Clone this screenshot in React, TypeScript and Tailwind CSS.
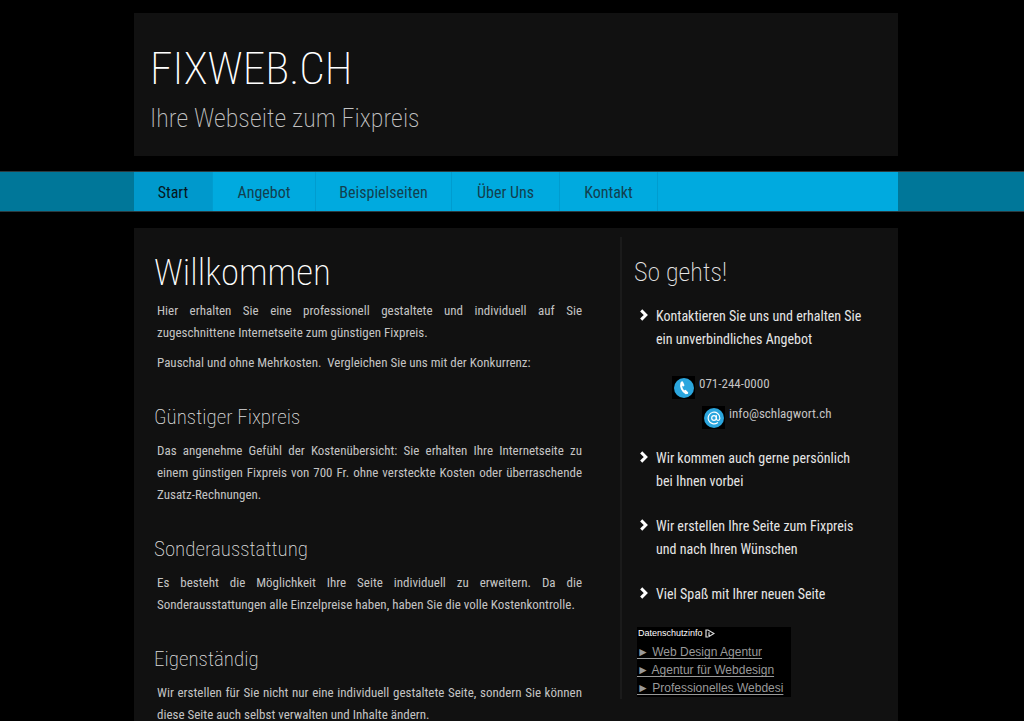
import type { ReactNode } from 'react'
import { AtSign } from 'lucide-react'

const navItems = [
  { label: 'Start', width: 'w-[79px]' },
  { label: 'Angebot', width: 'w-[103px]' },
  { label: 'Beispielseiten', width: 'w-[136px]' },
  { label: 'Über Uns', width: 'w-[108px]' },
  { label: 'Kontakt', width: 'w-[98px]' },
]

const sections = [
  {
    title: 'Günstiger Fixpreis',
    text: 'Das angenehme Gefühl der Kostenübersicht: Sie erhalten Ihre Internetseite zu einem günstigen Fixpreis von 700 Fr. ohne versteckte Kosten oder überraschende Zusatz-Rechnungen.',
  },
  {
    title: 'Sonderausstattung',
    text: 'Es besteht die Möglichkeit Ihre Seite individuell zu erweitern. Da die Sonderausstattungen alle Einzelpreise haben, haben Sie die volle Kostenkontrolle.',
  },
  {
    title: 'Eigenständig',
    text: 'Wir erstellen für Sie nicht nur eine individuell gestaltete Seite, sondern Sie können diese Seite auch selbst verwalten und Inhalte ändern.',
  },
]

const adLinks = ['Web Design Agentur', 'Agentur für Webdesign', 'Professionelles Webdesi']

function Container({ children }: { children: ReactNode }) {
  return (
    <div className="pl-2">
      <div className="mx-auto max-w-[764px]">{children}</div>
    </div>
  )
}

function Step({ children }: { children: ReactNode }) {
  return (
    <div className="flex gap-2 pl-1.5 text-sm leading-[23px] text-[#e6e6e6]">
      <svg viewBox="0 0 8 12" className="mt-1 h-3 w-2 shrink-0" fill="none" stroke="#fff" strokeWidth="3">
        <path d="M1.2 1.4 5.8 6 1.2 10.6" />
      </svg>
      <p>{children}</p>
    </div>
  )
}

function ContactIcon({ children }: { children: ReactNode }) {
  return (
    <span className="flex size-[23px] shrink-0 items-center justify-center self-end bg-black">
      <span className="flex size-5 items-center justify-center rounded-full bg-[#2ba6de] text-white">
        {children}
      </span>
    </span>
  )
}

function Handset() {
  return (
    <svg viewBox="0 0 14 14" className="size-3.5" fill="none" stroke="currentColor" strokeLinecap="round">
      <path d="M4.4 2.2C3.2 5.6 5.4 10.8 9 12.2" strokeWidth="2" />
      <path d="M5 1.6 6.2 4.2M8.2 10 10 11.8" strokeWidth="2.4" />
    </svg>
  )
}

export default function App() {
  return (
    <div className="bg-black pt-[13px] font-['Roboto_Condensed',Roboto,sans-serif] text-[#c4c4c4]">
      <Container>
        <header className="bg-[#111] px-4 pt-7 pb-5">
          <h1 className="text-[45px] leading-[56px] font-extralight text-white">FIXWEB.CH</h1>
          <p className="mt-1 text-[26px] leading-[35px] font-extralight text-[#c4c4c4]">Ihre Webseite zum Fixpreis</p>
        </header>
      </Container>

      <nav className="mt-[15px] border-y border-[#2b3a3f] bg-[#007799]">
        <Container>
          <ul className="flex h-[39px] bg-[#00aadf]">
            {navItems.map((item, i) => (
              <li key={item.label} className={item.width}>
                <a
                  href="#"
                  className={
                    'flex h-full items-center justify-center border-r border-[#009ccf] pt-0.5 text-base ' +
                    (i === 0 ? 'bg-[#0099cc] text-[#06161c]' : 'text-[#12404f]')
                  }
                >
                  {item.label}
                </a>
              </li>
            ))}
          </ul>
        </Container>
      </nav>

      <Container>
        <div className="mt-4 flex bg-[#111]">
          <main className="flex-1 pt-[21px] pr-[38px] pb-5 pl-5">
            <h1 className="mb-[3px] text-[37px] leading-[48px] font-extralight text-white">Willkommen</h1>
            <div className="space-y-2 pl-[3px] text-[13px] leading-[22px]">
              <p className="text-justify">
                Hier erhalten Sie eine professionell gestaltete und individuell auf Sie zugeschnittene
                Internetseite zum günstigen Fixpreis.
              </p>
              <p>Pauschal und ohne Mehrkosten.&nbsp; Vergleichen Sie uns mit der Konkurrenz:</p>
            </div>
            {sections.map((s) => (
              <section key={s.title} className="mt-[30px]">
                <h2 className="mb-2.5 text-[21px] leading-[26px] font-extralight text-[#dcdcdc]">{s.title}</h2>
                <p className="pl-[3px] text-justify text-[13px] leading-[22px]">{s.text}</p>
              </section>
            ))}
          </main>

          <aside className="mt-[9px] w-[278px] self-start border-l-2 border-[#1b1b1b] pt-[17px] pr-8 pb-0.5 pl-3">
            <h2 className="mb-[15px] text-[26px] leading-9 font-extralight text-[#e6e6e6]">So gehts!</h2>
            <Step>Kontaktieren Sie uns und erhalten Sie ein unverbindliches Angebot</Step>
            <div className="my-[18px] text-[13px] leading-[30px]">
              <p className="flex gap-1 pl-[38px]">
                <ContactIcon>
                  <Handset />
                </ContactIcon>
                071-244-0000
              </p>
              <p className="flex gap-1 pl-[68px]">
                <ContactIcon>
                  <AtSign className="size-3.5" strokeWidth={2} />
                </ContactIcon>
                <a href="mailto:info@schlagwort.ch">info@schlagwort.ch</a>
              </p>
            </div>
            <div className="space-y-[22px]">
              <Step>Wir kommen auch gerne persönlich bei Ihnen vorbei</Step>
              <Step>Wir erstellen Ihre Seite zum Fixpreis und nach Ihren Wünschen</Step>
              <Step>Viel Spaß mit Ihrer neuen Seite</Step>
            </div>

            <div className="mt-[21px] ml-[3px] w-[154px] overflow-hidden bg-black font-['Liberation_Sans',Arial,sans-serif]">
              <a href="#" className="mb-1 flex items-center gap-0.5 pl-px text-[9px] leading-3 text-white">
                Datenschutzinfo
                <svg viewBox="0 0 10 9" className="h-[9px] w-2.5" fill="none" stroke="#ddd" strokeWidth="1.2">
                  <path d="M3 8H1V1h2l6 3.5L4 7.4V3.2" />
                </svg>
              </a>
              {adLinks.map((link) => (
                <a
                  key={link}
                  href="#"
                  className="block text-xs leading-[18px] whitespace-pre text-[#999] underline underline-offset-2"
                >
                  {'► ' + link}
                </a>
              ))}
            </div>
          </aside>
        </div>
      </Container>
    </div>
  )
}
